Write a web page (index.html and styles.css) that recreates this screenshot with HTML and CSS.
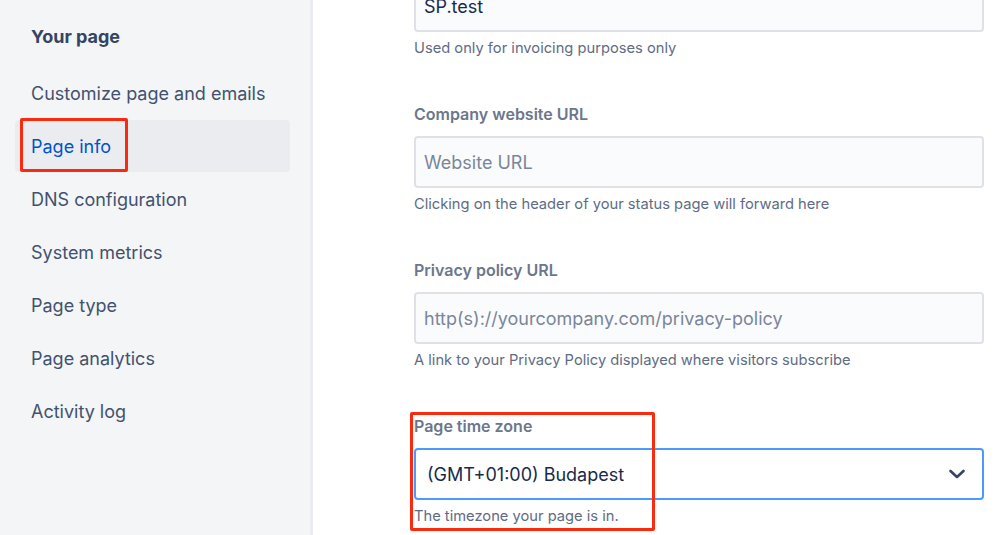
FILE: index.html
```html
<!DOCTYPE html>
<html lang="en">
<head>
<meta charset="utf-8">
<title>Page info</title>
<link rel="stylesheet" href="styles.css">
</head>
<body>
<div class="layout">
  <nav class="sidebar">
    <h2 class="sidebar-title">Your page</h2>
    <ul class="nav-list">
      <li class="nav-item">Customize page and emails</li>
      <li class="nav-item active">Page info</li>
      <li class="nav-item">DNS configuration</li>
      <li class="nav-item">System metrics</li>
      <li class="nav-item">Page type</li>
      <li class="nav-item">Page analytics</li>
      <li class="nav-item">Activity log</li>
    </ul>
  </nav>
  <main class="main">
    <form class="form">
      <div class="field">
        <div class="input value">SP.test</div>
        <p class="help">Used only for invoicing purposes only</p>
      </div>
      <div class="field">
        <label class="label">Company website URL</label>
        <div class="input placeholder">Website URL</div>
        <p class="help">Clicking on the header of your status page will forward here</p>
      </div>
      <div class="field">
        <label class="label">Privacy policy URL</label>
        <div class="input placeholder">http(s)://yourcompany.com/privacy-policy</div>
        <p class="help">A link to your Privacy Policy displayed where visitors subscribe</p>
      </div>
      <div class="field">
        <label class="label">Page time zone</label>
        <div class="select">
          <span class="select-value">(GMT+01:00) Budapest</span>
          <svg class="chevron" width="18" height="12" viewBox="0 0 18 12"><path d="M2.5 3 L9 9 L15.5 3" fill="none" stroke="#344563" stroke-width="2.6" stroke-linecap="round" stroke-linejoin="round"/></svg>
        </div>
        <p class="help">The timezone your page is in.</p>
      </div>
    </form>
  </main>
</div>
<div class="annot annot-nav"></div>
<div class="annot annot-tz"></div>
</body>
</html>
```
FILE: styles.css
```css
html, body {
  margin: 0;
  padding: 0;
  height: 100%;
  overflow: hidden;
  background: #ffffff;
  font-family: Inter, "Noto Sans", "Liberation Sans", sans-serif;
}
body { position: relative; }
.layout {
  display: flex;
  height: 535px;
}
.sidebar {
  width: 275px;
  flex: none;
  background: #f4f5f7;
  border-right: 3px solid #ebecf0;
  padding: 24px 20px 0 15px;
}
.sidebar-title {
  margin: 0 0 17px 16px;
  font-size: 18px;
  line-height: 26px;
  font-weight: 700;
  color: #344563;
}
.nav-list {
  list-style: none;
  margin: 0;
  padding: 0;
  display: flex;
  flex-direction: column;
  gap: 1px;
}
.nav-item {
  height: 52px;
  display: flex;
  align-items: center;
  padding-left: 16px;
  font-size: 18px;
  color: #42526e;
  border-radius: 4px;
}
.nav-item.active {
  background: #ebecf0;
  color: #0052cc;
}
.main {
  flex: 1;
  padding: 0 15px 0 101px;
}
.form {
  margin-top: -20px;
  display: flex;
  flex-direction: column;
  gap: 46px;
}
.field { display: flex; flex-direction: column; }
.label {
  font-size: 16px;
  line-height: 20px;
  font-weight: 600;
  color: #6b778c;
  margin-bottom: 12px;
}
.input {
  height: 52px;
  box-sizing: border-box;
  border: 2px solid #dfe1e6;
  border-radius: 4px;
  background: #fafbfc;
  padding: 0 8px;
  display: flex;
  align-items: center;
  font-size: 18px;
}
.input.placeholder { color: #7a869a; }
.input.value { color: #172b4d; }
.select {
  height: 52px;
  box-sizing: border-box;
  border: 2px solid #4c9aff;
  border-radius: 4px;
  background: #ffffff;
  padding: 0 16px 0 11px;
  display: flex;
  align-items: center;
  justify-content: space-between;
  font-size: 18px;
  color: #172b4d;
}
.help {
  margin: 6px 0 0;
  font-size: 14.7px;
  line-height: 20px;
  color: #5e6c84;
}
.annot {
  position: absolute;
  border: 3px solid #fa2a0f;
  border-radius: 2px;
  box-sizing: border-box;
}
.annot-nav { left: 20px; top: 118px; width: 108px; height: 54px; }
.annot-tz { left: 410px; top: 412px; width: 245px; height: 119px; }
```
